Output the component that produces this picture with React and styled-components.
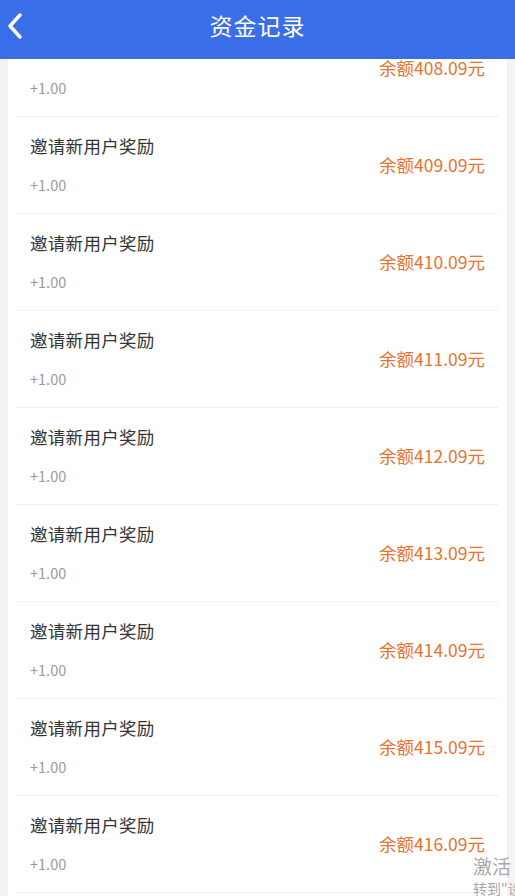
import React from "react";
import styled, { createGlobalStyle } from "styled-components";

const Global = createGlobalStyle`
    html, body {
        margin: 0;
        padding: 0;
        background: #f4f4f4;
        font-family: "Noto Sans CJK SC", "Noto Sans", sans-serif;
    }
`

const Page = styled.div`
    position: relative;
    width: 515px;
    height: 896px;
    overflow: hidden;
    display: flex;
    flex-direction: column;
`

const Header = styled.header`
    position: relative;
    z-index: 2;
    flex: 0 0 59px;
    background: #3a6ee9;
    display: flex;
    align-items: center;
    justify-content: center;
`

const Back = styled.div`
    position: absolute;
    left: 6px;
    top: 13px;
    width: 18px;
    height: 26px;
    display: flex;
`

const Title = styled.h1`
    margin: 0;
    color: #fff;
    font-size: 23px;
    font-weight: 400;
    letter-spacing: 1px;
    line-height: 1;
    margin-top: -8px;
`

const Body = styled.div`
    flex: 1;
    overflow: hidden;
    padding: 0 8px;
`

const Card = styled.div`
    margin-top: -39px;
    background: #fff;
    box-shadow: 0 0 3px rgba(0, 0, 0, 0.04);
    padding: 0 8px;
`

const Row = styled.div`
    position: relative;
    height: 96px;
    border-bottom: 1px solid #f1f1f1;
    display: flex;
    align-items: flex-start;
    justify-content: space-between;
    padding: 0 14px;
`

const Left = styled.div`
    display: flex;
    flex-direction: column;
    padding-top: 17px;
`

const Name = styled.div`
    font-size: 17.5px;
    color: #333;
    line-height: 24px;
    letter-spacing: 0.3px;
`

const Amount = styled.div`
    margin-top: 17px;
    font-size: 14.5px;
    color: #9a9a9a;
    line-height: 20px;
`

const Balance = styled.div`
    margin-top: 36px;
    font-size: 17.5px;
    color: #e8722e;
    line-height: 24px;
`

const Watermark = styled.div`
    position: absolute;
    left: 473px;
    top: 853px;
    color: #a8a8a8;
    white-space: nowrap;
    z-index: 3;
`

const WmBig = styled.div`
    font-size: 19px;
    line-height: 26px;
`

const WmSmall = styled.div`
    font-size: 14px;
    line-height: 18px;
`

const rows = [408, 409, 410, 411, 412, 413, 414, 415, 416, 417]

const App = () => {
    return (
        <Page>
            <Global />
            <Header>
                <Back>
                    <svg width="18" height="26" viewBox="0 0 18 26">
                        <path d="M14 2 L4 13 L14 24" fill="none" stroke="#fff" strokeWidth="3.4" strokeLinecap="round" strokeLinejoin="round" />
                    </svg>
                </Back>
                <Title>资金记录</Title>
            </Header>
            <Body>
                <Card>
                    {rows.map(n => (
                        <Row key={n}>
                            <Left>
                                <Name>邀请新用户奖励</Name>
                                <Amount>+1.00</Amount>
                            </Left>
                            <Balance>余额{n}.09元</Balance>
                        </Row>
                    ))}
                </Card>
            </Body>
            <Watermark>
                <WmBig>激活 Windows</WmBig>
                <WmSmall>转到"设置"以激活 Windows。</WmSmall>
            </Watermark>
        </Page>
    )
}

export default App;
